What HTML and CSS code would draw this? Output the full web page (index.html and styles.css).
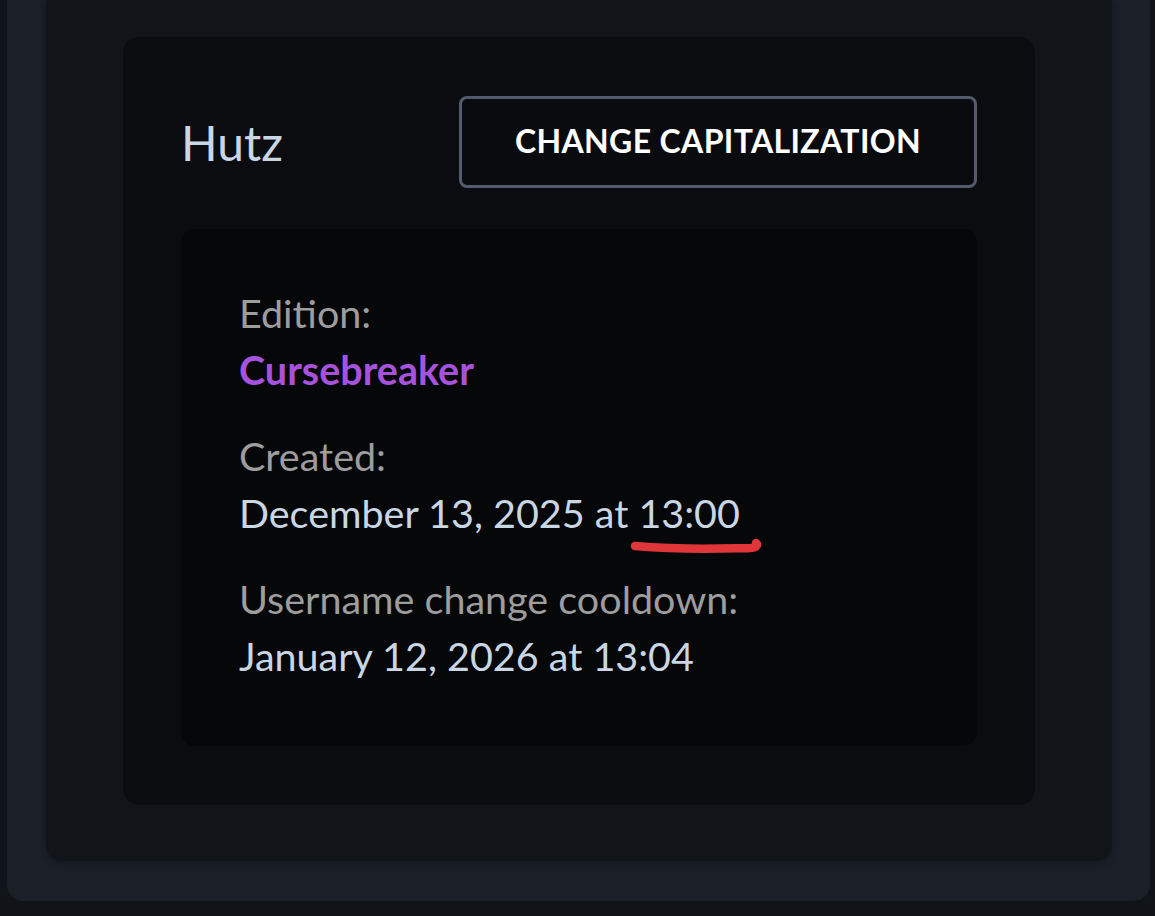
FILE: index.html
```html
<!DOCTYPE html>
<html lang="en">
<head>
<meta charset="utf-8">
<title>Account</title>
<link rel="stylesheet" href="styles.css">
</head>
<body>
<div class="outer">
  <div class="panel">
    <div class="card">
      <div class="card-head">
        <h2 class="username">Hutz</h2>
        <button class="btn">CHANGE CAPITALIZATION</button>
      </div>
      <div class="details">
        <div class="field">
          <div class="label">Edition:</div>
          <div class="value edition">Cursebreaker</div>
        </div>
        <div class="field">
          <div class="label">Created:</div>
          <div class="value">December 13, 2025 at <span class="marked">13:00<svg class="scribble" viewBox="0 0 132 18" width="132" height="18" aria-hidden="true"><path d="M5 10 C 30 12, 60 13, 90 12.5 S 118 13, 124 11.5 C 127 10.5, 128 8, 126 7" fill="none" stroke="#e0363a" stroke-width="8.5" stroke-linecap="round" stroke-linejoin="round"/></svg></span></div>
        </div>
        <div class="field">
          <div class="label">Username change cooldown:</div>
          <div class="value">January 12, 2026 at 13:04</div>
        </div>
      </div>
    </div>
  </div>
</div>
</body>
</html>
```
FILE: styles.css
```css
* { box-sizing: border-box; }
html, body {
  margin: 0;
  padding: 0;
  background: #101317;
  height: 916px;
  overflow: hidden;
  font-family: Lato, "Noto Sans", sans-serif;
}
.outer {
  margin: 0 5px 0 7px;
  padding: 0 38px 40px 39px;
  background: #1a1f28;
  border-radius: 0 0 16px 16px;
}
.panel {
  background: #111418;
  border-radius: 0 0 16px 16px;
  padding: 37px 77px 56px 77px;
  box-shadow: 0 2px 6px rgba(0,0,0,0.25);
}
.card {
  background: #0b0c10;
  border-radius: 16px;
  padding: 59px 58px 59px 58px;
}
.card-head {
  display: flex;
  align-items: center;
  justify-content: space-between;
  margin-bottom: 41px;
}
.username {
  margin: 0;
  font-weight: 400;
  font-size: 48px;
  color: #c9d6e3;
  line-height: 1;
  padding-top: 2px;
}
.btn {
  width: 518px;
  height: 92px;
  background: #0a0b0e;
  border: 3px solid #525a6b;
  border-radius: 8px;
  color: #ffffff;
  font-family: inherit;
  font-weight: 700;
  font-size: 32px;
  letter-spacing: 0.35px;
  padding: 0 0 4px 0;
}
.details {
  background: #060709;
  border-radius: 14px;
  padding: 55px 59px 62px 58px;
  display: flex;
  flex-direction: column;
  gap: 29px;
}
.label, .value {
  font-size: 39.5px;
  line-height: 57px;
  white-space: nowrap;
}
.label { color: #9d9d9f; }
.value { color: #c9d6e3; }
.edition {
  color: #a752dc;
  font-weight: 700;
}
.marked {
  position: relative;
}
.scribble {
  position: absolute;
  left: -8px;
  top: 47px;
}
```
